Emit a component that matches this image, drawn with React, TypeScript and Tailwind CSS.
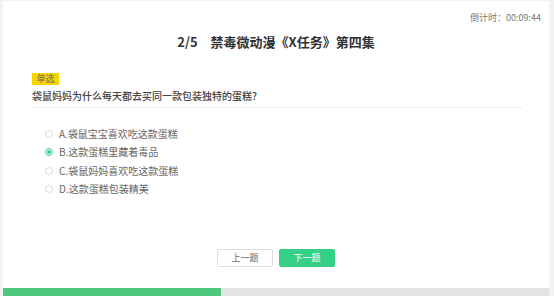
import React from 'react';

const options = [
  { key: 'A', text: '袋鼠宝宝喜欢吃这款蛋糕', checked: false },
  { key: 'B', text: '这款蛋糕里藏着毒品', checked: true },
  { key: 'C', text: '袋鼠妈妈喜欢吃这款蛋糕', checked: false },
  { key: 'D', text: '这款蛋糕包装精美', checked: false },
];

const App = () => {
  return (
    <div
      className="w-[554px] h-[296px] bg-[#f2f2f2] pt-px pl-[3px] pr-[5px]"
      style={{ fontFamily: '"Noto Sans CJK SC", "Noto Sans", sans-serif' }}
    >
      <div className="h-full bg-white flex flex-col">
        {/* Timer */}
        <div className="flex justify-end pr-[8px] pt-[11px] text-[9px] leading-[12px] text-[#777]">
          倒计时：00:09:44
        </div>

        {/* Title */}
        <div className="mt-[9px] flex justify-center items-center gap-[13px] text-[13px] leading-[18px] font-bold text-[#333]">
          <span>2/5</span>
          <span>禁毒微动漫《X任务》第四集</span>
        </div>

        {/* Question */}
        <div className="pl-[29px] pr-[27px]">
          <div className="mt-[22px] w-[27px] h-[12px] bg-[#f7d300] text-[9px] leading-[12px] text-[#666] text-center">
            单选
          </div>
          <div className="mt-[4px] pb-[4px] border-b border-[#ececec] text-[10px] leading-[14px] font-medium text-[#444]">
            袋鼠妈妈为什么每天都去买同一款包装独特的蛋糕?
          </div>

          <div className="mt-[17px] pl-[13px] flex flex-col">
            {options.map((o) => (
              <div key={o.key} className="h-[18.3px] flex items-center gap-[6px]">
                {o.checked ? (
                  <span className="w-[8px] h-[8px] rounded-full border border-[#3ccf8e] flex items-center justify-center">
                    <span className="w-[4px] h-[4px] rounded-full bg-[#3ccf8e]" />
                  </span>
                ) : (
                  <span className="w-[8px] h-[8px] rounded-full border border-[#dcdcdc]" />
                )}
                <span className="text-[10px] leading-[14px] text-[#666]">
                  {o.key}.{o.text}
                </span>
              </div>
            ))}
          </div>
        </div>

        <div className="flex-1" />

        {/* Buttons */}
        <div className="flex justify-center gap-[6px] mb-[21px]">
          <button className="w-[56px] h-[18px] border border-[#dcdcdc] rounded-[2px] bg-white text-[9px] text-[#666]">
            上一题
          </button>
          <button className="w-[56px] h-[18px] rounded-[2px] bg-[#35d088] text-[9px] text-white">
            下一题
          </button>
        </div>

        {/* Progress */}
        <div className="h-[8px] bg-[#e4e4e4] flex">
          <div className="bg-[#4ec97c]" style={{ width: `${(2 / 5) * 100}%` }} />
        </div>
      </div>
    </div>
  );
};

export default App;
